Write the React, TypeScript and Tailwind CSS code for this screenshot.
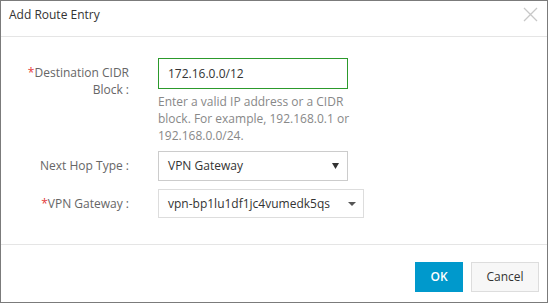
import React from "react";

function Row({ label, required, children }: { label: React.ReactNode; required?: boolean; children: React.ReactNode }) {
  return (
    <div className="flex items-start">
      <div className="w-[130px] shrink-0 pl-[20px] pr-[2px] pt-[6px] text-right text-[12px] leading-[17px] text-[#666]">
        {required && <span className="text-[#e4393c]">*</span>}
        {label}
      </div>
      <div className="ml-[27px]">{children}</div>
    </div>
  );
}

export default function App() {
  return (
    <div className="w-[548px] h-[303px] flex flex-col bg-white border border-[#7b7b7b] font-['Open_Sans',sans-serif]">
      {/* Header */}
      <div className="h-[36px] shrink-0 flex items-start justify-between border-b border-[#e5e5e5] pl-[8px] pr-[9px] pt-[6px]">
        <span className="text-[12px] leading-[16px] text-[#333]">Add Route Entry</span>
        <svg width="15" height="15" viewBox="0 0 15 15">
          <path d="M1 1 L14 14 M14 1 L1 14" stroke="#c8c8c8" strokeWidth="1.3" />
        </svg>
      </div>

      {/* Body */}
      <div className="flex-1 flex flex-col pt-[21px] border-b border-[#e5e5e5]">
        <Row
          required
          label={
            <>
              Destination CIDR
              <br />
              Block :
            </>
          }
        >
          <div className="w-[190px] h-[31px] border border-[#2c9a2c] flex items-center px-[9px] text-[12px] text-[#333]">
            172.16.0.0/12
          </div>
          <p className="w-[200px] mt-[4px] text-[12px] leading-[17px] text-[#888]">
            Enter a valid IP address or a CIDR block. For example, 192.168.0.1 or 192.168.0.0/24.
          </p>
        </Row>

        <div className="mt-[7px]">
          <Row label="Next Hop Type :">
            <div className="w-[190px] h-[30px] border border-[#ccc] flex items-center justify-between pl-[9px] pr-[8px] text-[12px] text-[#333]">
              <span>VPN Gateway</span>
              <svg width="7" height="6" viewBox="0 0 7 6">
                <path d="M0 0 H7 L3.5 6 Z" fill="#333" />
              </svg>
            </div>
          </Row>
        </div>

        <div className="mt-[8px]">
          <Row label="VPN Gateway :" required>
            <div className="w-[206px] h-[29px] border border-[#ddd] flex items-center justify-between pl-[9px] pr-[7px] text-[12px] text-[#333]">
              <span>vpn-bp1lu1df1jc4vumedk5qs</span>
              <svg width="8" height="4" viewBox="0 0 8 4">
                <path d="M0 0 H8 L4 4 Z" fill="#555" />
              </svg>
            </div>
          </Row>
        </div>
      </div>

      {/* Footer */}
      <div className="h-[57px] shrink-0 flex justify-end items-start gap-[8px] pt-[17px] pr-[8px]">
        <button className="w-[48px] h-[30px] bg-[#0099cc] text-white text-[12px] font-semibold">OK</button>
        <button className="w-[68px] h-[30px] bg-[#f7f7f7] border border-[#ddd] text-[#333] text-[12px]">Cancel</button>
      </div>
    </div>
  );
}
